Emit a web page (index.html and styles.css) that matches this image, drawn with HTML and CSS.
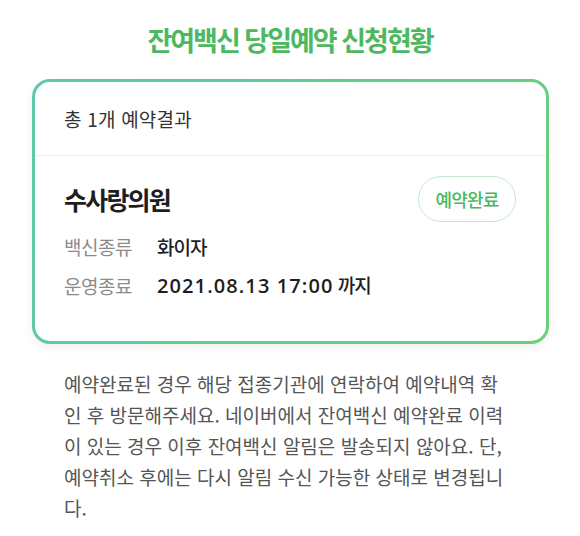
FILE: index.html
```html
<!DOCTYPE html>
<html lang="ko">
<head>
<meta charset="utf-8">
<title>잔여백신 당일예약 신청현황</title>
<link rel="stylesheet" href="styles.css">
</head>
<body>
<main class="page">
  <h1 class="title">잔여백신 당일예약 신청현황</h1>
  <section class="card">
    <div class="card-head">총 1개 예약결과</div>
    <div class="card-body">
      <div class="top-row">
        <h2 class="name">수사랑의원</h2>
        <span class="badge">예약완료</span>
      </div>
      <div class="row">
        <span class="label">백신종류</span>
        <span class="value">화이자</span>
      </div>
      <div class="row">
        <span class="label">운영종료</span>
        <span class="value"><span class="num">2021.08.13 17:00</span> 까지</span>
      </div>
    </div>
  </section>
  <p class="notice">예약완료된 경우 해당 접종기관에 연락하여 예약내역 확인 후 방문해주세요. 네이버에서 잔여백신 예약완료 이력이 있는 경우 이후 잔여백신 알림은 발송되지 않아요. 단, 예약취소 후에는 다시 알림 수신 가능한 상태로 변경됩니다.</p>
</main>
</body>
</html>
```

FILE: styles.css
```css
html, body {
  margin: 0;
  padding: 0;
  background: #ffffff;
}

body {
  font-family: "Noto Sans CJK KR", "Noto Sans", sans-serif;
  color: #222222;
}

.page {
  width: 580px;
  padding-top: 22px;
}

.title {
  margin: 0;
  text-align: center;
  font-size: 27px;
  line-height: 36px;
  font-weight: 700;
  letter-spacing: -2px;
  color: #4cb961;
}

.card {
  margin: 21px 31px 0 32px;
  border: 3px solid transparent;
  border-radius: 18px;
  background:
    linear-gradient(#ffffff, #ffffff) padding-box,
    linear-gradient(120deg, #5ec8ad 0%, #66cb90 55%, #6dcf78 100%) border-box;
  box-shadow: 0 4px 10px rgba(0, 0, 0, 0.06);
}

.card-head {
  height: 73px;
  display: flex;
  align-items: center;
  padding: 0 29px;
  font-size: 19px;
  letter-spacing: 0.2px;
  color: #333333;
  border-bottom: 1px solid #f0f0f0;
}

.card-body {
  padding: 20px 30px 42px 29px;
}

.top-row {
  display: flex;
  justify-content: space-between;
  align-items: center;
  height: 46px;
  margin-bottom: 10px;
}

.name {
  margin: 0;
  font-size: 25px;
  font-weight: 700;
  letter-spacing: -1.8px;
  color: #1e1e1e;
}

.badge {
  box-sizing: border-box;
  height: 46px;
  width: 98px;
  display: flex;
  align-items: center;
  justify-content: center;
  border: 1.5px solid #c3e8cd;
  border-radius: 23px;
  font-size: 18px;
  font-weight: 500;
  letter-spacing: -0.8px;
  color: #48b85f;
}

.row {
  display: flex;
  align-items: center;
  height: 28px;
  margin-top: 11px;
}

.row:nth-child(2) {
  margin-top: 0;
}

.label {
  width: 93px;
  font-size: 19px;
  letter-spacing: -0.5px;
  color: #8b8b8b;
}

.value {
  font-size: 19px;
  font-weight: 500;
  letter-spacing: -1px;
  color: #1e1e1e;
}

.num {
  font-family: "Open Sans", "Noto Sans", sans-serif;
  font-size: 20px;
  font-weight: 600;
  letter-spacing: 1.1px;
}

.notice {
  margin: 24px 0 0 64px;
  width: 444px;
  font-size: 19px;
  line-height: 31px;
  color: #555555;
}
```
